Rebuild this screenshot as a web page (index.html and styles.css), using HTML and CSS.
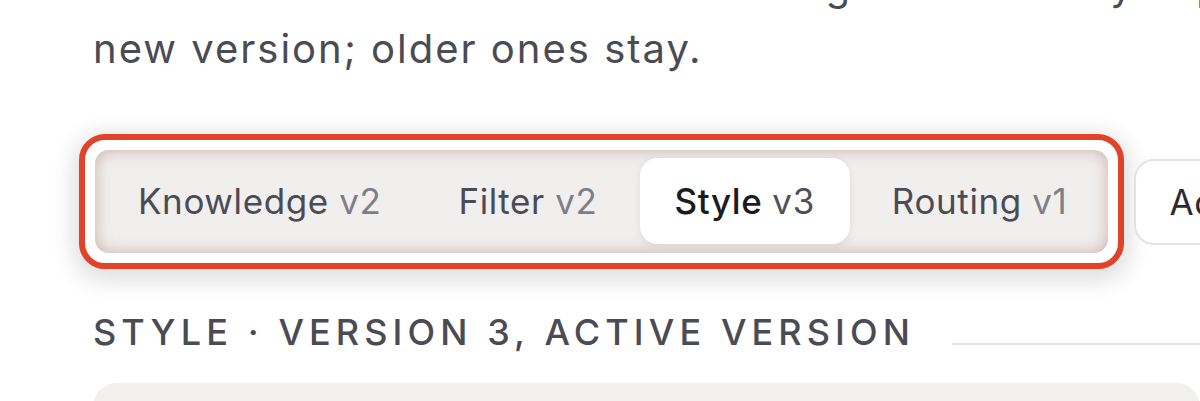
FILE: index.html
```html
<!DOCTYPE html>
<html lang="en">
<head>
<meta charset="utf-8">
<title>Block versions</title>
<link rel="stylesheet" href="styles.css">
</head>
<body>
<main class="page">
  <p class="intro">Each time the rules of a block change a new entry is published as a<br>new version; older ones stay.</p>

  <div class="tabs-row">
    <div class="highlight">
      <nav class="segmented">
        <button class="seg">Knowledge <span class="ver">v2</span></button>
        <button class="seg">Filter <span class="ver">v2</span></button>
        <button class="seg active">Style <span class="ver">v3</span></button>
        <button class="seg">Routing <span class="ver">v1</span></button>
      </nav>
    </div>
    <button class="add">Add block</button>
  </div>

  <div class="section-head">
    <h2 class="section-title">Style · Version 3, active version</h2>
    <span class="rule"></span>
  </div>

  <div class="panel"></div>
</main>
</body>
</html>
```

FILE: styles.css
```css
html, body {
  margin: 0;
  padding: 0;
  background: #ffffff;
  overflow: hidden;
}

body {
  font-family: Inter, "Noto Sans", sans-serif;
  color: #4a4b53;
}

.page {
  padding-left: 93px;
}

.intro {
  margin: -46px 0 0;
  font-size: 40px;
  line-height: 63px;
  letter-spacing: 2px;
  white-space: nowrap;
  color: #4a4b53;
}

.tabs-row {
  display: flex;
  align-items: center;
  gap: 10px;
  margin-top: 54px;
  margin-left: -14px;
}

.highlight {
  flex: none;
  padding: 10px;
  border: 6px solid #e04329;
  border-radius: 26px;
  background: #ffffff;
  box-shadow: 0 6px 22px 6px rgba(0, 0, 0, 0.13);
}

.segmented {
  display: flex;
  gap: 7px;
  padding: 8px 6px 8px 8px;
  height: 87px;
  background: #f0efed;
  border-radius: 14px;
  box-shadow: inset 0 0 16px rgba(160, 100, 90, 0.45);
}

.seg {
  height: 86px;
  padding: 0 35px;
  border: 0;
  border-radius: 18px;
  background: transparent;
  font-family: inherit;
  font-size: 35px;
  letter-spacing: 0.6px;
  color: #4a4b55;
  white-space: nowrap;
}

.seg .ver {
  color: #7d7f87;
}

.seg.active {
  background: #ffffff;
  color: #1b1b20;
  font-weight: 500;
  box-shadow: 0 2px 8px rgba(0, 0, 0, 0.08);
}

.seg.active .ver {
  color: #4f5058;
  font-weight: 400;
}

.add {
  flex: none;
  height: 86px;
  padding: 0 33px;
  border: 2px solid #e4e3e0;
  border-radius: 20px;
  background: #ffffff;
  font-family: inherit;
  font-size: 35px;
  letter-spacing: 0.6px;
  color: #2a2b30;
  white-space: nowrap;
}

.section-head {
  display: flex;
  gap: 37px;
  height: 44px;
  margin-top: 41px;
}

.section-title {
  margin: 0;
  font-size: 36px;
  line-height: 44px;
  font-weight: 500;
  letter-spacing: 5.1px;
  text-transform: uppercase;
  color: #4a4b53;
  white-space: nowrap;
}

.rule {
  flex: 1;
  align-self: flex-end;
  height: 2px;
  margin-bottom: 9px;
  background: #e2e2e2;
}

.panel {
  margin-top: 29px;
  height: 120px;
  background: #f1f0ee;
  border-radius: 24px;
}
```
